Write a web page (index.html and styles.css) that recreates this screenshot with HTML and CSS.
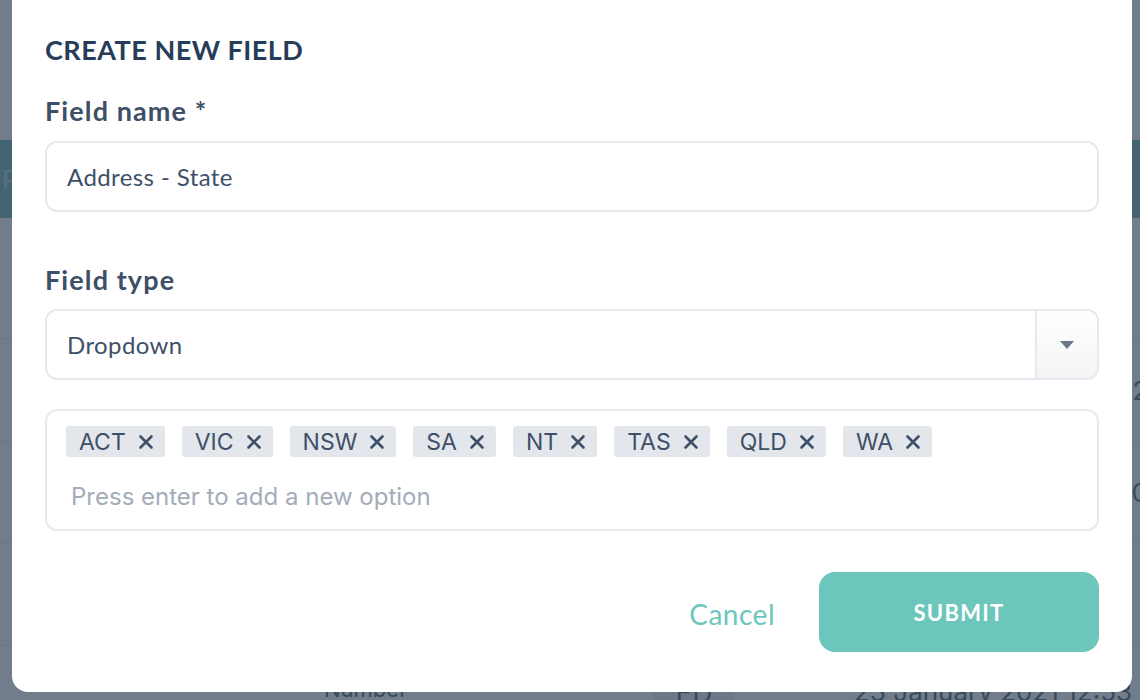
FILE: index.html
```html
<!DOCTYPE html>
<html>
<head>
<meta charset="utf-8">
<link rel="stylesheet" href="styles.css">
</head>
<body>
<div class="page">
  <div class="bg-header"></div>
  <div class="bg-band"><span class="bg-band-text">R</span></div>
  <div class="bg-row bg-row-1"></div>
  <div class="bg-row bg-row-2"><span class="bg-edge">2</span></div>
  <div class="bg-row bg-row-3"><span class="bg-edge">0</span></div>
  <div class="bg-row bg-row-4"></div>
  <div class="bg-last">
    <span class="bg-type">Number</span>
    <span class="bg-badge">ED</span>
    <span class="bg-date">23 January 2021 12:53</span>
  </div>
</div>
<div class="overlay"></div>
<div class="modal">
  <h2 class="title">CREATE NEW FIELD</h2>
  <label class="label">Field name *</label>
  <div class="input">Address - State</div>
  <label class="label label-type">Field type</label>
  <div class="select">
    <div class="select-value">Dropdown</div>
    <div class="select-btn"><span class="caret"></span></div>
  </div>
  <div class="tags">
    <div class="chips">
      <span class="chip">ACT <svg class="x" viewBox="0 0 16 16"><path d="M2.5 2.5L13.5 13.5M13.5 2.5L2.5 13.5"/></svg></span>
      <span class="chip">VIC <svg class="x" viewBox="0 0 16 16"><path d="M2.5 2.5L13.5 13.5M13.5 2.5L2.5 13.5"/></svg></span>
      <span class="chip">NSW <svg class="x" viewBox="0 0 16 16"><path d="M2.5 2.5L13.5 13.5M13.5 2.5L2.5 13.5"/></svg></span>
      <span class="chip">SA <svg class="x" viewBox="0 0 16 16"><path d="M2.5 2.5L13.5 13.5M13.5 2.5L2.5 13.5"/></svg></span>
      <span class="chip">NT <svg class="x" viewBox="0 0 16 16"><path d="M2.5 2.5L13.5 13.5M13.5 2.5L2.5 13.5"/></svg></span>
      <span class="chip">TAS <svg class="x" viewBox="0 0 16 16"><path d="M2.5 2.5L13.5 13.5M13.5 2.5L2.5 13.5"/></svg></span>
      <span class="chip">QLD <svg class="x" viewBox="0 0 16 16"><path d="M2.5 2.5L13.5 13.5M13.5 2.5L2.5 13.5"/></svg></span>
      <span class="chip">WA <svg class="x" viewBox="0 0 16 16"><path d="M2.5 2.5L13.5 13.5M13.5 2.5L2.5 13.5"/></svg></span>
    </div>
    <div class="placeholder">Press enter to add a new option</div>
  </div>
  <div class="actions">
    <button class="cancel">Cancel</button>
    <button class="submit">SUBMIT</button>
  </div>
</div>
</body>
</html>
```
FILE: styles.css
```css
* { box-sizing: border-box; }
html, body { margin: 0; padding: 0; }
body {
  width: 1140px;
  height: 700px;
  overflow: hidden;
  background: #f4f6f8;
  font-family: "Lato", "Noto Sans", sans-serif;
  position: relative;
}
.page {
  display: flex;
  flex-direction: column;
  height: 700px;
}
.bg-header { height: 140px; }
.bg-band {
  height: 78px;
  background: #4fa0a2;
  display: flex;
  align-items: center;
}
.bg-band-text {
  font-family: "Inter", sans-serif;
  font-size: 26px;
  color: #9fc8c8;
  margin-left: 2px;
}
.bg-row {
  height: 102px;
  border-bottom: 2px solid #e6e9ee;
  display: flex;
  align-items: center;
  justify-content: flex-end;
}
.bg-row-1 { height: 122px; }
.bg-edge {
  font-family: "Inter", sans-serif;
  font-size: 26px;
  color: #2e3b4e;
  margin-right: -8px;
}
.bg-last {
  position: absolute;
  left: 0; right: 0; top: 676px;
  display: flex;
  align-items: flex-start;
  font-family: "Inter", sans-serif;
  font-size: 22px;
  color: #2e3b4e;
}
.bg-type { margin-left: 324px; }
.bg-badge {
  margin-left: 246px;
  background: #e3e6ea;
  padding: 0 22px;
  font-size: 28px;
  border-radius: 14px;
}
.bg-date { margin-left: auto; margin-right: 8px; font-size: 26px; }
.overlay {
  position: absolute;
  inset: 0;
  background: rgba(63, 77, 97, 0.72);
}
.modal {
  position: absolute;
  left: 12px;
  top: -16px;
  width: 1120px;
  height: 708px;
  background: #ffffff;
  border-radius: 16px;
  padding: 50px 33px 0 33px;
  display: flex;
  flex-direction: column;
}
.title {
  margin: 0;
  font-weight: 700;
  font-size: 27px;
  line-height: 32px;
  color: #263d5a;
  letter-spacing: 0.5px;
}
.label {
  display: block;
  margin-top: 29px;
  font-weight: 700;
  font-size: 27px;
  line-height: 32px;
  color: #3e5068;
  letter-spacing: 1.1px;
}
.label-type { margin-top: 52px; }
.input {
  margin-top: 14px;
  height: 71px;
  border: 2px solid #e6eaf0;
  border-radius: 12px;
  display: flex;
  align-items: center;
  padding-left: 20px;
  font-size: 24px;
  letter-spacing: 0.4px;
  color: #3e5068;
}
.select {
  margin-top: 13px;
  height: 71px;
  border: 2px solid #e6eaf0;
  border-radius: 12px;
  display: flex;
  overflow: hidden;
}
.select-value {
  flex: 1;
  display: flex;
  align-items: center;
  padding-left: 20px;
  font-size: 24px;
  letter-spacing: 0.4px;
  color: #3e5068;
}
.select-btn {
  width: 62px;
  border-left: 2px solid #e6eaf0;
  background: linear-gradient(#ffffff, #f3f4f6);
  display: flex;
  align-items: center;
  justify-content: center;
}
.caret {
  width: 0; height: 0;
  border-left: 7px solid transparent;
  border-right: 7px solid transparent;
  border-top: 8px solid #6b7789;
}
.tags {
  margin-top: 29px;
  height: 122px;
  border: 2px solid #e6eaf0;
  border-radius: 12px;
  padding: 15px 19px 0 19px;
}
.chips {
  display: flex;
  gap: 17px;
}
.chip {
  height: 31px;
  background: #e3e6eb;
  border-radius: 3px;
  padding: 0 11px 0 13px;
  display: flex;
  align-items: center;
  font-family: "Inter", "Liberation Sans", sans-serif;
  font-size: 23px;
  color: #3e5068;
}
.chip .x {
  margin-left: 12px;
  width: 16px;
  height: 16px;
  fill: none;
  stroke: #3e5068;
  stroke-width: 2.6;
  stroke-linecap: round;
}
.placeholder {
  margin-top: 25px;
  padding-left: 5px;
  font-family: "Inter", "Liberation Sans", sans-serif;
  font-size: 24px;
  color: #a3acb8;
}
.actions {
  margin-top: 41px;
  display: flex;
  justify-content: flex-end;
  align-items: center;
}
button {
  font-family: "Lato", sans-serif;
  border: none;
  cursor: pointer;
}
.cancel {
  background: none;
  color: #6cc6bc;
  font-size: 28px;
  letter-spacing: 0.5px;
  margin-right: 44px;
  padding: 0;
  margin-top: 4px;
}
.submit {
  width: 280px;
  height: 80px;
  border-radius: 16px;
  background: #6dc6bc;
  color: #ffffff;
  font-size: 22px;
  font-weight: 700;
  letter-spacing: 1.3px;
}
```
